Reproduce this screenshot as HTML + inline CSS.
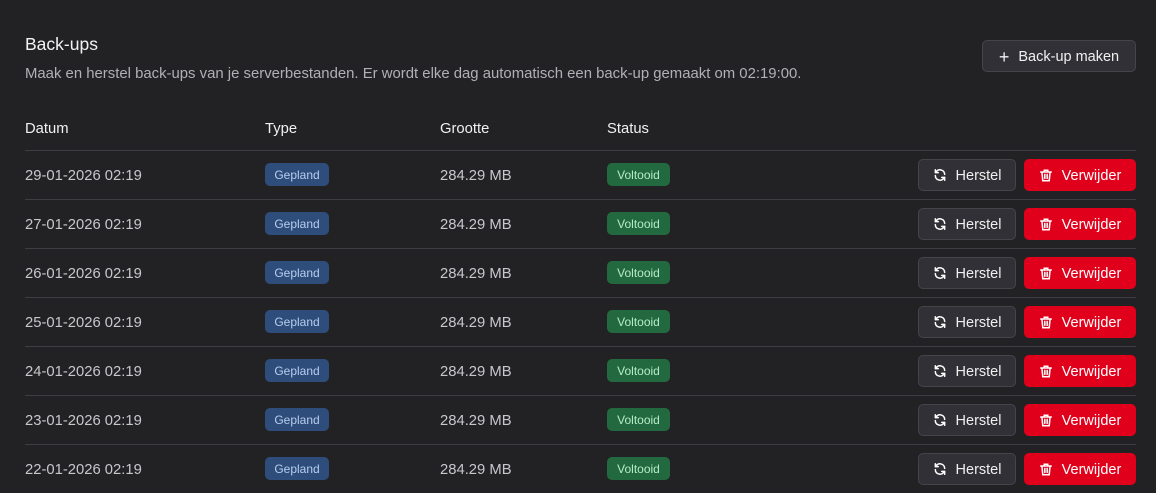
<!DOCTYPE html>
<html><head><style>
body{margin:0;background:#222224;font-family:"Liberation Sans",sans-serif;color:#e4e4e7;width:1156px;height:493px;overflow:hidden;position:relative}
.t{position:absolute;left:25px;top:34px;font-size:17.5px;color:#f2f2f3}
.s{position:absolute;left:25px;top:66px;font-size:14.9px;color:#b0b0b6}
.btn{position:absolute;box-sizing:border-box;border-radius:5px;font-size:14.5px;display:flex;align-items:center;justify-content:center;gap:9px;padding-top:1px}
.btn svg{margin-top:-1px}
.g{background:#303036;border:1px solid #44444a;color:#f0f0f2}
.r{background:#e0001b;color:#fff}
.h{position:absolute;top:121px;font-size:14.8px;color:#f0f0f2}
.line{position:absolute;left:25px;width:1111px;height:1px;background:#3e3e42}
.c{position:absolute;font-size:14.8px;color:#c8c8cc}
.b{position:absolute;height:23px;border-radius:5px;font-size:12px;display:flex;align-items:center;justify-content:center}
.bp{background:#2f4d7a;color:#b5cdf0;width:64px;left:265px}
.bv{background:#23693f;color:#b4ebc6;width:63px;left:607px}
</style></head><body>
<div class="t">Back-ups</div>
<div class="s">Maak en herstel back-ups van je serverbestanden. Er wordt elke dag automatisch een back-up gemaakt om 02:19:00.</div>
<div class="btn g" style="left:982px;top:40px;width:154px;height:32px"><span style="font-size:18px;line-height:1">+</span>Back-up maken</div>
<div class="h" style="left:25px">Datum</div><div class="h" style="left:265px">Type</div><div class="h" style="left:440px">Grootte</div><div class="h" style="left:607px">Status</div>
<div id="rows"></div>
<script>
var d=["29","27","26","25","24","23","22"],h="";
var ref='<svg width="14" height="14" viewBox="0 0 24 24" fill="none" stroke="#fff" stroke-width="2.6" stroke-linecap="round" stroke-linejoin="round"><path d="M20 11a8 8 0 0 0-14.5-4.5L4 8M4 3v5h5M4 13a8 8 0 0 0 14.5 4.5L20 16M20 21v-5h-5"/></svg>';
var tr='<svg width="14" height="15" viewBox="0 0 24 24" fill="none" stroke="#fff" stroke-width="2.6" stroke-linecap="round"><path d="M3 6h18M9 6V3h6v3M5 6l1.5 15h11L19 6M10 10v7M14 10v7"/></svg>';
for(var i=0;i<7;i++){var y=150+i*49;
h+='<div class="line" style="top:'+y+'px"></div>';
h+='<div class="c" style="left:25px;top:'+(y+18)+'px">'+d[i]+'-01-2026 02:19</div>';
h+='<div class="b bp" style="top:'+(y+13)+'px">Gepland</div>';
h+='<div class="c" style="left:440px;top:'+(y+18)+'px">284.29 MB</div>';
h+='<div class="b bv" style="top:'+(y+13)+'px">Voltooid</div>';
h+='<div class="btn g" style="left:918px;top:'+(y+9)+'px;width:98px;height:32px">'+ref+'Herstel</div>';
h+='<div class="btn r" style="left:1024px;top:'+(y+9)+'px;width:112px;height:32px">'+tr+'Verwijder</div>';}
document.getElementById('rows').innerHTML=h;
</script>
</body></html>
